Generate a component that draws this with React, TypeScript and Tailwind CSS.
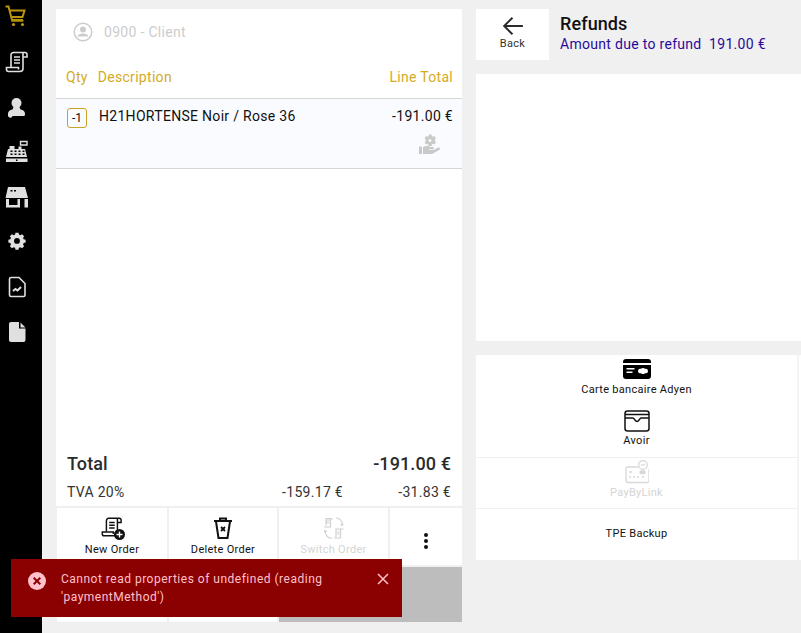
import React from "react";

const Cart = () => (
  <svg width="24" height="24" viewBox="2.500 0 24 24" fill="none" stroke="#b8930b" strokeWidth="2">
    <path d="M3 1.500h3l3.500 13.500h11M7 5.500h15l-2 6.500H8.500" />
    <circle cx="11" cy="19.500" r="1.600" fill="#b8930b" stroke="none" />
    <circle cx="20" cy="19.500" r="1.600" fill="#b8930b" stroke="none" />
    <path d="M9 16h12" strokeWidth="1.500" />
  </svg>
);
const Scroll = ({ c = "#e0e0e0", s = 24, box = "0 0 24 24" }: { c?: string; s?: number; box?: string }) => (
  <svg width={s} height={s} viewBox={box} fill="none" stroke={c} strokeWidth="1.600">
    <path d="M7 17V5a2.500 2.500 0 0 1 2.500-2.500H21a2 2 0 0 1 2 2.500v2h-4" />
    <path d="M19 3v15.500a3 3 0 0 1-3 3H4.500a2 2 0 0 1-2-2V17.500h12v2" />
    <path d="M10 7h6M10 10h6M10 13h6" />
  </svg>
);
const Person = () => (
  <svg width="24" height="24" viewBox="1 0 24 24" fill="#e0e0e0">
    <circle cx="12.500" cy="8" r="5" />
    <path d="M9.500 12h6l1 2.500c3 .5 4.500 2 4.500 4.500v.5a1.500 1.500 0 0 1-1.500 1.500h-11A1.500 1.500 0 0 1 4 19.500V19c0-2.500 1.500-4 4.500-4.500z" />
  </svg>
);
const Register = () => (
  <svg width="24" height="24" viewBox="0.500 0 24 24" fill="#e0e0e0">
    <path d="M5 6h5v3h4V6.500h3V9h3.500l2 8H1.500l2-8H5z" />
    <path d="M16 1.500h6.500v3.500H16z" fill="none" stroke="#e0e0e0" strokeWidth="1.400" />
    <path d="M1.500 18.500h21.500V22H1.500z" />
    <g fill="#000">
      <rect x="6" y="10.500" width="2" height="1.500" /><rect x="10" y="10.500" width="2" height="1.500" />
      <rect x="14" y="10.500" width="2" height="1.500" /><rect x="18" y="10.500" width="2" height="1.500" />
      <rect x="6" y="13.500" width="2" height="1.500" /><rect x="10" y="13.500" width="2" height="1.500" />
      <rect x="14" y="13.500" width="2" height="1.500" /><rect x="18" y="13.500" width="2" height="1.500" />
      <rect x="11.500" y="19.500" width="1.500" height="1.500" />
    </g>
  </svg>
);
const Store = () => (
  <svg width="24" height="24" viewBox="0.500 0 24 24" fill="#e0e0e0">
    <path fillRule="evenodd" d="M3.500 2h17l3 11H1zM6 5v1.500h2V5zm3.500 0v1.500h2V5z" />
    <path d="M1.500 14h3v8.500h-3zM20 14h3.500v8.500H20zM4.500 20h11v2.500h-11zM13 14h2.500v7H13z" />
  </svg>
);
const Gear = () => (
  <svg width="24" height="24" viewBox="-1.500 0.500 27 27" fill="#e0e0e0">
    <path fillRule="evenodd" d="M10.300 3.500h3.400l.5 2.200 1.500.7 2-1.200 2.300 2.300-1.200 2 .7 1.500 2.200.5v3.200l-2.200.5-.7 1.500 1.200 2-2.300 2.300-2-1.200-1.500.7-.5 2.200h-3.400l-.5-2.200-1.500-.7-2 1.200-2.300-2.300 1.200-2-.7-1.500-2.200-.5v-3.200l2.200-.5.7-1.500-1.200-2 2.300-2.300 2 1.200 1.500-.7zM12 9.500a3.300 3.300 0 1 0 0 6.600 3.300 3.300 0 0 0 0-6.600z" />
  </svg>
);
const FileChart = () => (
  <svg width="24" height="24" viewBox="0 0 24 24" fill="none" stroke="#e0e0e0" strokeWidth="1.600">
    <path d="M6 2.500h8l6 6v11.500a1.500 1.500 0 0 1-1.500 1.500h-12.500a1.500 1.500 0 0 1-1.500-1.500V4a1.500 1.500 0 0 1 1.500-1.500z" />
    <path d="M8 16l2.500-2 2 1.500 3.500-3.500" strokeWidth="2" />
  </svg>
);
const FileFilled = () => (
  <svg width="24" height="24" viewBox="0 0 24 24" fill="#e0e0e0">
    <path d="M6 2h8v6.500h6.500V20a2 2 0 0 1-2 2H6a2 2 0 0 1-2-2V4a2 2 0 0 1 2-2zM15.500 2.500l5 5h-5z" />
  </svg>
);

const NavBar = () => (
  <nav className="flex w-[42px] shrink-0 flex-col items-center gap-[21px] bg-black pt-[5px] pr-[9px]">
    <Cart /><Scroll box="1 0 24 24" /><Person /><Register /><Store /><Gear /><FileChart /><FileFilled />
  </nav>
);

const ClientIcon = () => (
  <svg width="20" height="20" viewBox="0 0 20 20" fill="none" stroke="#cccccc" strokeWidth="1.500">
    <circle cx="10" cy="10" r="8.750" />
    <circle cx="10" cy="7.500" r="3" fill="#cccccc" stroke="none" />
    <path d="M4.500 14.500c.5-2 2.500-3 5.500-3s5 1 5.500 3z" fill="#cccccc" stroke="none" />
  </svg>
);

const HandGear = () => (
  <svg width="22" height="22" viewBox="0 0 22 22" fill="#c9c9c9">
    <path fillRule="evenodd" d="M10.500 1.500h3l.3 1.500 1.300.7 1.400-.6 1.400 2.400-1.100 1 .1 1.500 1.100 1-1.400 2.400-1.400-.6-1.300.7-.3 1.500h-3l-.3-1.500-1.300-.7-1.400.6L6.700 9l1.100-1-.1-1.500-1-1 1.400-2.400 1.400.6 1.300-.7zM12 6a1.500 1.500 0 1 0 0 3 1.500 1.500 0 0 0 0-3z" />
    <path d="M1 13.500h3V21H1zM5 14l3-1c2-.5 3 0 4 1h3c1 0 1 2 0 2h-4v.7h5l4-2c1.500-.5 2.500 1 1.500 2L14 21H5z" />
  </svg>
);

const NewOrderIcon = () => (
  <div className="relative h-[24px] w-[24px]">
    <Scroll c="#111111" s={22} />
    <svg className="absolute right-[-1px] bottom-0" width="11" height="11" viewBox="0 0 11 11">
      <circle cx="5.500" cy="5.500" r="5.500" fill="#111" />
      <path d="M2.500 5.500h6M5.500 2.500v6" stroke="#fff" strokeWidth="1.400" />
    </svg>
  </div>
);
const TrashIcon = () => (
  <svg width="24" height="24" viewBox="0 0 24 24" fill="none" stroke="#111" strokeWidth="2">
    <path d="M3 5h18M9 5V2.500h6V5" />
    <path d="M5 5.500l2.500 16.500h9L19 5.500" />
    <path d="M10 11l4 4M14 11l-4 4" strokeWidth="1.800" />
  </svg>
);
const SwitchIcon = () => (
  <svg width="24" height="24" viewBox="0 0 24 24" fill="none" stroke="#d0d0d0" strokeWidth="1.200">
    <path d="M2 11h6.500V2.500H4v7M4 3h7M4.500 5h3M4.500 7h3" />
    <path d="M12 22h6.500v-9H14v8M14 13h7.500M15 16h2.500M15 18h2.500" />
    <path d="M14 2c3.500.2 6 2.500 6.500 7M21 7.500l-.5 2-2-1M10 22.500C6 22 3.500 19.500 3 15M2.500 16.500l.5-2 2 1" />
  </svg>
);
const Dots = () => (
  <svg width="6" height="18" viewBox="0 0 6 18" fill="#111">
    <circle cx="3" cy="3" r="2" /><circle cx="3" cy="9" r="2" /><circle cx="3" cy="15" r="2" />
  </svg>
);

const Card = () => (
  <svg width="28" height="20" viewBox="0 0 28 20" fill="#000">
    <path fillRule="evenodd" d="M3 0h22a3 3 0 0 1 3 3v1H0V3a3 3 0 0 1 3-3zM0 6h28v11a3 3 0 0 1-3 3H3a3 3 0 0 1-3-3zm3.500 3v1.500h8V9zm0 3.500V14h6v-1.500zM20 9a3 3 0 0 0-2 .8 3 3 0 0 0-2 .2 2.500 2.500 0 0 0 0 4 3 3 0 0 0 2 .2 3 3 0 0 0 4 0 3 3 0 0 0 2-.2 2.500 2.500 0 0 0 0-4 3 3 0 0 0-2-.2A3 3 0 0 0 20 9z" />
  </svg>
);
const Wallet = () => (
  <svg width="26" height="22" viewBox="0 0 26 22" fill="none" stroke="#111" strokeWidth="1.500">
    <rect x="1" y="1" width="24" height="20" rx="2.500" />
    <path d="M1 4.500h24M1 8h8c1.500 0 1.500 3.500 4 3.500s2.500-3.500 4-3.500h8" />
  </svg>
);
const PayLink = () => (
  <svg width="24" height="24" viewBox="0 0 24 24" fill="none" stroke="#d8d8d8" strokeWidth="1.300">
    <path d="M13 7H3a2 2 0 0 0-2 2v11.500a2 2 0 0 0 2 2h19a2 2 0 0 0 2-2V9" />
    <circle cx="18" cy="5" r="4.300" />
    <path d="M16 5h4" />
    <path d="M4 12h3M4 17h2M8 17h2M12 17h2M17 17h2" />
    <rect x="15" y="11" width="5" height="2.500" rx="1" fill="#d8d8d8" />
  </svg>
);

const ActionButton = ({ icon, label, cls, muted }: { icon: React.ReactNode; label?: string; cls: string; muted?: boolean }) => (
  <div className={`flex flex-col items-center bg-white pt-[8px] ${cls}`}>
    <div className="flex h-[24px] items-center justify-center">{icon}</div>
    {label && (
      <span className={`mt-[2px] text-[11px] leading-[16px] tracking-[0.3px] ${muted ? "text-[#d4d4d4]" : "text-[#111]"}`}>{label}</span>
    )}
  </div>
);

const OrderPanel = () => (
  <section className="flex w-[406px] shrink-0 flex-col bg-white tracking-[0.3px]">
    <div className="flex h-[46px] items-center gap-[11px] pl-[17px] text-sm text-[#cccccc]">
      <ClientIcon />
      <span>0900 - Client</span>
    </div>
    <div className="flex h-[44px] items-center justify-between border-b border-[#d6d6d6] pr-[9px] pl-[10px] text-sm text-[#d4ab25]">
      <div className="flex gap-[10px]">
        <span>Qty</span>
        <span>Description</span>
      </div>
      <span>Line Total</span>
    </div>
    <div className="flex h-[70px] flex-col border-b border-[#d6d6d6] bg-[#fafbff] pt-[9px] pr-[9px] pl-[11px]">
      <div className="flex items-start justify-between text-sm text-[#111]">
        <div className="flex items-start gap-[12px]">
          <span className="flex h-[20px] w-[20px] items-center justify-center rounded-[3px] border border-[#c9a227] text-xs tracking-normal">-1</span>
          <span className="leading-[16px]">H21HORTENSE Noir / Rose 36</span>
        </div>
        <span className="leading-[16px]">-191.00 €</span>
      </div>
      <div className="mt-[5px] mr-[13px] flex justify-end">
        <HandGear />
      </div>
    </div>
    <div className="flex-1" />
    <div className="flex items-center justify-between px-[11px] text-lg leading-[26px] font-medium tracking-[0.1px] text-[#2b2b2b]">
      <span>Total</span>
      <span>-191.00 €</span>
    </div>
    <div className="mt-[3px] mb-[2px] grid grid-cols-[1fr_auto_108px] px-[11px] text-sm leading-[24px] text-[#333]">
      <span>TVA 20%</span>
      <span>-159.17 €</span>
      <span className="text-right">-31.83 €</span>
    </div>
    <div className="grid grid-cols-[110px_108px_109px_1fr] gap-[2px] bg-[#f0f0f0] pt-[2px] pl-[1px] tracking-normal">
      <ActionButton cls="h-[57px]" icon={<NewOrderIcon />} label="New Order" />
      <ActionButton cls="h-[57px]" icon={<TrashIcon />} label="Delete Order" />
      <ActionButton cls="h-[57px]" icon={<SwitchIcon />} label="Switch Order" muted />
      <ActionButton cls="h-[57px] justify-center pt-0" icon={<Dots />} />
      <div className="h-[55px] bg-white" />
      <div className="h-[55px] bg-white" />
      <div className="col-span-2 h-[55px] bg-[#bdbdbd]" />
    </div>
  </section>
);

const PayRow = ({ children, cls = "" }: { children: React.ReactNode; cls?: string }) => (
  <div className={`flex w-[323px] flex-col items-center border-r-2 border-[#f4f4f4] ${cls}`}>{children}</div>
);

const RefundPanel = () => (
  <section className="flex min-w-0 flex-1 flex-col">
    <div className="flex h-[51px]">
      <div className="flex w-[73px] flex-col items-center bg-white pt-[7px]">
        <svg width="22" height="20" viewBox="0 0 20 18" fill="none" stroke="#2b2b2b" strokeWidth="1.800">
          <path d="M19 9H2M9.500 1.500L2 9l7.500 7.500" />
        </svg>
        <span className="text-[11px] leading-[16px] tracking-[0.3px] text-[#333]">Back</span>
      </div>
      <div className="pt-[4px] pl-[11px]">
        <div className="text-lg leading-[22px] font-medium tracking-[0.1px] text-[#111]">Refunds</div>
        <div className="text-sm leading-[18px] tracking-[0.3px] text-[#2a0a9a]">Amount due to refund&nbsp; 191.00 €</div>
      </div>
    </div>
    <div className="mt-[14px] h-[267px] bg-white" />
    <div className="mt-[14px] flex flex-col bg-white text-[#111]">
      <PayRow cls="h-[103px] border-b border-b-[#f0f0f0] pt-[4px]">
        <Card />
        <span className="mt-[3px] text-[11px] leading-[16px] tracking-[0.3px]">Carte bancaire Adyen</span>
        <div className="mt-[12px]"><Wallet /></div>
        <span className="mt-[1px] text-[11px] leading-[16px] tracking-[0.3px]">Avoir</span>
      </PayRow>
      <PayRow cls="h-[51px] border-b border-b-[#f0f0f0] pt-[2px]">
        <PayLink />
        <span className="mt-[1px] text-[11px] leading-[16px] tracking-[0.3px] text-[#d4d4d4]">PayByLink</span>
      </PayRow>
      <PayRow cls="h-[51px] justify-center pb-[2px]">
        <span className="text-[11px] leading-[16px] tracking-[0.3px]">TPE Backup</span>
      </PayRow>
    </div>
  </section>
);

const Toast = () => (
  <div className="absolute top-[559px] left-[11px] flex h-[58px] w-[391px] items-start bg-[#8b0000] pt-[11px] pr-[13px] pl-[17px] text-xs leading-[18px] tracking-[0.5px] text-[#ffc0cb]">
    <svg className="mt-[2px] shrink-0" width="18" height="18" viewBox="0 0 18 18">
      <circle cx="9" cy="9" r="9" fill="#ffc0cb" />
      <path d="M5.700 5.700l6.600 6.600M12.300 5.700l-6.600 6.600" stroke="#8b0000" strokeWidth="2" />
    </svg>
    <p className="ml-[15px] flex-1">Cannot read properties of undefined (reading 'paymentMethod')</p>
    <svg className="mt-[3px] shrink-0" width="12" height="12" viewBox="0 0 12 12" stroke="#ffc0cb" strokeWidth="1.500">
      <path d="M1 1l10 10M11 1L1 11" />
    </svg>
  </div>
);

export default function App() {
  return (
    <div className="relative flex h-[633px] w-[801px] overflow-hidden bg-[#f0f0f0] font-['Roboto',sans-serif]">
      <NavBar />
      <main className="flex min-w-0 flex-1 gap-[14px] pt-[9px] pb-[11px] pl-[14px]">
        <OrderPanel />
        <RefundPanel />
      </main>
      <Toast />
    </div>
  );
}
